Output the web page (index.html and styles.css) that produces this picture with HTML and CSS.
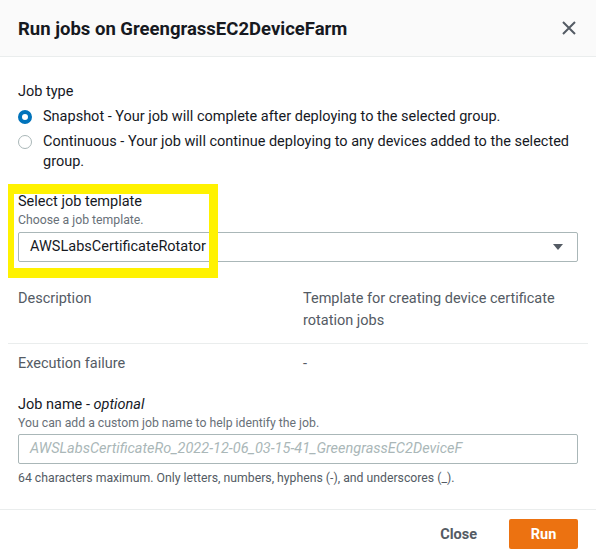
FILE: index.html
```
<!DOCTYPE html>
<html>
<head>
<meta charset="utf-8">
<link rel="stylesheet" href="styles.css">
</head>
<body>
<div class="modal">
  <div class="header">
    <h2 class="title">Run jobs on GreengrassEC2DeviceFarm</h2>
    <button class="close-x" aria-label="Close">
      <svg width="14" height="14" viewBox="0 0 14 14"><path d="M1 1 L13 13 M13 1 L1 13" stroke="#545b64" stroke-width="2" fill="none"/></svg>
    </button>
  </div>
  <div class="content">
    <div class="field">
      <div class="label">Job type</div>
      <div class="radios">
        <label class="radio"><span class="dot checked"></span><span class="rtext">Snapshot - Your job will complete after deploying to the selected group.</span></label>
        <label class="radio"><span class="dot"></span><span class="rtext">Continuous - Your job will continue deploying to any devices added to the selected group.</span></label>
      </div>
    </div>
    <div class="field template-field">
      <div class="label">Select job template</div>
      <div class="desc">Choose a job template.</div>
      <div class="select">
        <span>AWSLabsCertificateRotator</span>
        <svg class="caret" width="10" height="7" viewBox="0 0 10 7"><path d="M0 0 H10 L5 6 Z" fill="#545b64"/></svg>
      </div>
      <div class="highlight"></div>
    </div>
    <div class="kv">
      <div class="kv-row">
        <div class="kv-key">Description</div>
        <div class="kv-val">Template for creating device certificate rotation jobs</div>
      </div>
      <div class="kv-row">
        <div class="kv-key">Execution failure</div>
        <div class="kv-val">-</div>
      </div>
    </div>
    <div class="field name-field">
      <div class="label">Job name - <i>optional</i></div>
      <div class="desc">You can add a custom job name to help identify the job.</div>
      <div class="input"><span>AWSLabsCertificateRo_2022-12-06_03-15-41_GreengrassEC2DeviceF</span></div>
      <div class="help">64 characters maximum. Only letters, numbers, hyphens (-), and underscores (_).</div>
    </div>
  </div>
  <div class="footer">
    <button class="btn-link">Close</button>
    <button class="btn-primary">Run</button>
  </div>
</div>
</body>
</html>
```
FILE: styles.css
```
* { box-sizing: border-box; }
body {
  margin: 0;
  font-family: Roboto, "Noto Sans", sans-serif;
  font-size: 14.5px;
  line-height: 20px;
  color: #16191f;
  background: #ffffff;
}
.modal {
  width: 596px;
  height: 557px;
  display: flex;
  flex-direction: column;
  background: #fff;
  position: relative;
}
.header {
  height: 57px;
  flex: none;
  background: #fafafa;
  border-bottom: 1px solid #eaeded;
  display: flex;
  align-items: center;
  justify-content: space-between;
  padding: 0 20px 0 18px;
}
.title {
  margin: 0;
  font-size: 18.5px;
  font-weight: 700;
  line-height: 24px;
  color: #16191f;
  padding-top: 1px;
}
.close-x {
  border: 0;
  background: none;
  padding: 0;
  width: 14px;
  height: 14px;
  display: flex;
}
.content {
  padding: 25px 18px 0 18px;
  display: flex;
  flex-direction: column;
}
.label { line-height: 20px; }
.radios {
  display: flex;
  flex-direction: column;
  gap: 5px;
  margin-top: 5px;
}
.radio {
  display: flex;
  align-items: flex-start;
  gap: 11px;
  padding-left: 0;
}
.dot {
  flex: none;
  width: 14px;
  height: 14px;
  border-radius: 50%;
  border: 1.5px solid #aab7b8;
  margin-top: 3px;
  background: #fff;
}
.dot.checked {
  border: 4.5px solid #0073bb;
}
.template-field {
  margin-top: 20px;
  position: relative;
}
.desc {
  font-size: 12.25px;
  line-height: 16px;
  color: #687078;
}
.select {
  margin-top: 4px;
  height: 30px;
  border: 1px solid #aab7b8;
  border-radius: 2px;
  display: flex;
  align-items: center;
  justify-content: space-between;
  padding: 0 14px 0 11px;
}
.caret { display: block; }
.highlight {
  position: absolute;
  left: -10px;
  top: -8px;
  width: 210px;
  height: 94px;
  border-style: solid;
  border-color: #fff200;
  border-width: 10px 9px 10px 6px;
  pointer-events: none;
}
.kv {
  margin: 26px -10px 0 -10px;
  padding: 0 10px;
}
.kv-row {
  display: grid;
  grid-template-columns: 285px 1fr;
  line-height: 22px;
  color: #545b64;
}
.kv-row + .kv-row {
  border-top: 1px solid #eaeded;
  margin: 0 -10px;
  padding: 9px 10px 0 10px;
}
.kv-row:first-child { padding-bottom: 11px; }
.name-field { margin-top: 20px; }
.input {
  margin-top: 3px;
  height: 30px;
  border: 1px solid #aab7b8;
  border-radius: 2px;
  display: flex;
  align-items: center;
  padding: 0 11px;
  font-style: italic;
  color: #aab7b8;
  white-space: nowrap;
  overflow: hidden;
}
.help {
  margin-top: 6px;
  font-size: 12.25px;
  line-height: 16px;
  color: #545b64;
}
.footer {
  margin-top: auto;
  border-top: 1px solid #eaeded;
  padding: 9px 18px 8px 18px;
  display: flex;
  justify-content: flex-end;
  align-items: center;
  gap: 12px;
}
button { font-family: inherit; cursor: pointer; }
.btn-link {
  border: 0;
  background: none;
  font-size: 14.5px;
  font-weight: 700;
  color: #545b64;
  height: 30px;
  padding: 0 20px;
}
.btn-primary {
  border: 0;
  border-radius: 2px;
  background: #ec7211;
  color: #fff;
  font-size: 14.5px;
  font-weight: 700;
  width: 69px;
  height: 30px;
  padding: 0;
}
```
